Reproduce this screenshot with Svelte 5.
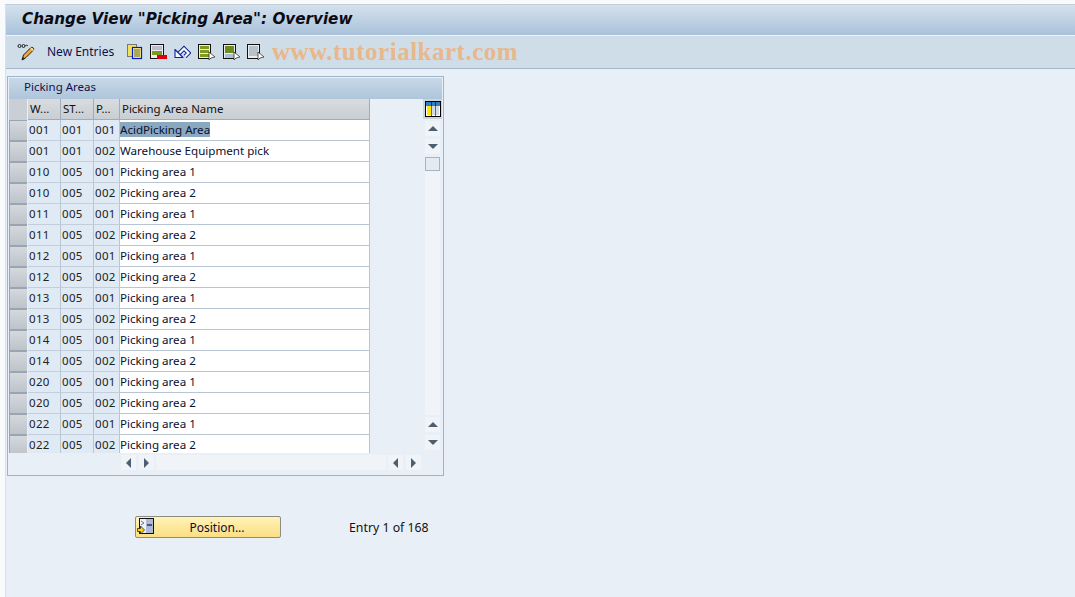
<script>
  const base = [['001','001','001','AcidPicking Area'],['001','001','002','Warehouse Equipment pick']];
  const groups = ['010','011','012','013','014','020','022'];
  const rows = [...base];
  for (const g of groups) {
    rows.push([g,'005','001','Picking area 1']);
    rows.push([g,'005','002','Picking area 2']);
  }
</script>

<div class="page">
  <div class="inner">
    <header class="title"><h1>Change View "Picking Area": Overview</h1></header>
    <div class="toolbar">
      <svg class="ic pencil" width="18" height="18" viewBox="0 0 18 18">
        <path d="M5 17l1.500-5L14 4.500c1.500-1 3.500 1 2.500 2.500L9 14.500z" fill="#f6a92c" stroke="#1c1c1c" stroke-width="1"/>
        <path d="M14 5l2.500 2.500" stroke="#f4e8c8" stroke-width="1.500"/>
        <path d="M5 17l1-3 2 2z" fill="#222"/>
        <circle cx="2.500" cy="3" r="1.500" fill="none" stroke="#222"/>
        <circle cx="6.500" cy="3" r="1.500" fill="none" stroke="#222"/>
        <path d="M8 3c1-1 2-1 3 0" fill="none" stroke="#222"/>
      </svg>
      <span class="ne">New Entries</span>
      <svg class="ic copy" width="16" height="16" viewBox="0 0 16 16">
        <rect x="0.500" y="0.500" width="9" height="12" fill="#f1e15a" stroke="#777"/>
        <rect x="5.500" y="3.500" width="9" height="11" fill="#fff27a" stroke="#0018c8" stroke-width="1.200"/>
        <path d="M7 6h6M7 8h6M7 10h6M7 12h6" stroke="#333" stroke-width="0.800"/>
      </svg>
      <svg class="ic del" width="17" height="17" viewBox="0 0 17 17">
        <rect x="0.500" y="0.500" width="13" height="14" fill="#e8eef2" stroke="#111"/>
        <path d="M2 3h10M2 5h10" stroke="#98a" stroke-width="1.200"/>
        <rect x="2" y="7" width="10" height="4" fill="#7f9a1f"/>
        <rect x="7" y="11" width="10" height="4" fill="#e00010"/>
      </svg>
      <svg class="ic undo" width="17" height="15" viewBox="0 0 17 15">
        <path d="M5 8.500L10 3.500 14.500 8 11 11.500" fill="none" stroke="#10209a" stroke-width="4.200"/>
        <path d="M5 8.500L10 3.500 14.500 8 11 11.500" fill="none" stroke="#f4f8ff" stroke-width="2.200"/>
        <path d="M1 4.500V12.500H9z" fill="#f4f8ff" stroke="#10209a" stroke-width="1.100" stroke-linejoin="round"/>
      </svg>
      <svg class="ic prev" width="18" height="17" viewBox="0 0 18 17">
        <rect x="0.500" y="0.500" width="12" height="14" fill="#e8eef2" stroke="#111"/>
        <rect x="2" y="2" width="9" height="3" fill="#7f9a1f"/>
        <rect x="2" y="6" width="9" height="3" fill="#7f9a1f"/>
        <rect x="2" y="10" width="9" height="3" fill="#7f9a1f"/>
        <path d="M11 8v8l2-2 4-1z" fill="#fff" stroke="#333" stroke-width="0.800"/>
      </svg>
      <svg class="ic next" width="18" height="17" viewBox="0 0 18 17">
        <rect x="0.500" y="0.500" width="12" height="14" fill="#e8eef2" stroke="#111"/>
        <rect x="2" y="2" width="9" height="7" fill="#6d8a1c"/>
        <path d="M2 11h9M2 13h9" stroke="#6a90b8" stroke-width="1.200"/>
        <path d="M11 8v8l2-2 4-1z" fill="#fff" stroke="#333" stroke-width="0.800"/>
      </svg>
      <svg class="ic last" width="18" height="17" viewBox="0 0 18 17">
        <rect x="0.500" y="0.500" width="12" height="14" fill="#e8eef2" stroke="#111"/>
        <path d="M2 3h9M2 5h9M2 7h9M2 9h9M2 11h9" stroke="#8a94a0" stroke-width="1"/>
        <path d="M11 8v8l2-2 4-1z" fill="#fff" stroke="#333" stroke-width="0.800"/>
      </svg>
      <span class="wm">www.tutorialkart.com</span>
    </div>

    <main class="content">
      <section class="panel">
        <div class="panel-head">Picking Areas</div>
        <div class="panel-body">
          <div class="tablewrap">
            <div class="row head">
              <div class="sel corner"></div>
              <div class="c c1 hc">W...</div>
              <div class="c c2 hc">ST...</div>
              <div class="c c3 hc">P...</div>
              <div class="c c4 hc">Picking Area Name</div>
            </div>
            {#each rows as r, i}
              <div class="row">
                <div class="sel"></div>
                <div class="c c1 key">{r[0]}</div>
                <div class="c c2 key">{r[1]}</div>
                <div class="c c3 key">{r[2]}</div>
                <div class="c c4 val"><span class:mark={i === 0}>{r[3]}</span></div>
              </div>
            {/each}
          </div>
          <div class="vscroll">
            <div class="cfg">
              <svg width="16" height="16" viewBox="0 0 16 16">
                <rect x="0.500" y="0.500" width="15" height="15" fill="#fff" stroke="#000"/>
                <rect x="1" y="1" width="14" height="4" fill="#2f7fc4"/>
                <rect x="2" y="5" width="4" height="9" fill="#ffe600"/>
                <rect x="7" y="5" width="3" height="9" fill="#d4dbe2"/>
                <rect x="11" y="5" width="3" height="9" fill="#d4dbe2"/>
                <path d="M6.500 1v14M10.500 1v14" stroke="#000" stroke-width="0.600"/>
              </svg>
            </div>
            <button class="sb" aria-label="up"><i class="up"></i></button>
            <button class="sb" aria-label="down"><i class="down"></i></button>
            <div class="thumb"></div>
            <div class="track"></div>
            <button class="sb" aria-label="up"><i class="up"></i></button>
            <button class="sb" aria-label="down"><i class="down"></i></button>
          </div>
          <div class="hscroll">
            <button class="sb" aria-label="left"><i class="left"></i></button>
            <button class="sb" aria-label="right"><i class="right"></i></button>
            <div class="htrack"></div>
            <button class="sb" aria-label="left"><i class="left"></i></button>
            <button class="sb" aria-label="right"><i class="right"></i></button>
          </div>
        </div>
      </section>

      <div class="actions">
        <button class="pos">
          <svg class="posic" width="17" height="17" viewBox="0 0 17 17">
            <rect x="2.500" y="0.500" width="14" height="15" fill="#aebbd8" stroke="#111"/>
            <rect x="3" y="1" width="6" height="14" fill="#eef2f8"/>
            <path d="M10 7h5" stroke="#334" stroke-width="1.500"/>
            <path d="M4 3l3 2-3 2" fill="none" stroke="#556" stroke-width="0.800"/>
            <path d="M0.500 10.500h3v-2.500l4 4-4 4v-2.500h-3z" fill="#ffd800" stroke="#222" stroke-width="0.800"/>
          </svg>
          <span>Position...</span>
        </button>
        <span class="entry">Entry 1 of 168</span>
      </div>
    </main>
  </div>
</div>

<style>
  :global(body) { margin: 0; background: #fff; }
  .page { width: 1075px; height: 597px; overflow: hidden; font-family: "Noto Sans", sans-serif; font-size: 11.600px; color: #111; background: #f8fafc; padding: 4px 0 0 5px; box-sizing: border-box; }
  .inner { height: 593px; display: flex; flex-direction: column; background: #e9eff6; border-top: 1px solid #c3ced9; border-left: 1px solid #d8e0e8; box-sizing: border-box; }
  .title { height: 30px; background: linear-gradient(#d4e1ed, #a9c2da); display: flex; align-items: center; padding-left: 16px; padding-bottom: 2px; box-sizing: border-box; flex: none; }
  h1 { margin: 0; font: italic bold 15.200px "DejaVu Sans", sans-serif; color: #0b0b14; white-space: nowrap; }
  .toolbar { height: 34px; background: #cfdde8; border-top: 1px solid #eef3f7; border-bottom: 1px solid #a5b8c9; box-sizing: border-box; display: flex; align-items: center; flex: none; }
  .ic { flex: none; }
  .pencil { margin-left: 11px; }
  .ne { margin-left: 12px; font-size: 12px; color: #10104a; width: 79px; white-space: nowrap; position: relative; top: -1px; }
  .copy { margin-left: 1px; }
  .del { margin-left: 7px; }
  .undo { margin-left: 7px; }
  .prev { margin-left: 7px; }
  .next { margin-left: 7px; }
  .last { margin-left: 6px; }
  .wm { margin-left: 7px; font: bold 25px "Liberation Serif", serif; color: #e8b88a; white-space: nowrap; letter-spacing: 0.500px; }
  .content { flex: 1; padding: 7px 0 0 1px; box-sizing: border-box; }
  .panel { width: 437px; height: 400px; box-sizing: border-box; border: 1px solid #9db5cc; padding: 1px; background: #e9eff6; }
  .panel-head { height: 21px; background: linear-gradient(#c8d8e7, #aec5db); padding-left: 15px; line-height: 17px; font-size: 11.500px; color: #10104a; box-sizing: border-box; }
  .panel-body { display: grid; grid-template-columns: 414px 19px; grid-template-rows: 354px 22px; }
  .tablewrap { overflow: hidden; }
  .row { display: flex; height: 21px; }
  .sel { width: 18px; margin-right: 1px; flex: none; box-sizing: border-box; background: linear-gradient(#d5d9de, #bcc3ca); border: 1px solid #9aa5b0; border-width: 1px 0 1px 1px; }
  .corner { background: #c9cfd5; border: none; }
  .c { box-sizing: border-box; height: 21px; line-height: 19px; font-size: 11.600px; white-space: nowrap; overflow: hidden; flex: none; }
  .c1 { width: 33px; }
  .c2 { width: 33px; }
  .c3 { width: 26px; }
  .c4 { width: 250px; }
  .hc { background: linear-gradient(#d8dcdf, #c8ced3); border-right: 1px solid #9fadba; border-bottom: 1px solid #9fadba; padding-left: 2px; color: #111; font-size: 11.450px; }
  .key { background: #dfeaf5; border-right: 1px solid #b8c6d4; border-bottom: 1px solid #c2cedb; padding-left: 1px; color: #222; font-size: 11.500px; letter-spacing: 0.300px; }
  .val { background: #fff; border-right: 1px solid #b8c6d4; border-bottom: 1px solid #b8c6d4; color: #0a1030; }
  .mark { background: #8aa8c0; }
  .vscroll { display: flex; flex-direction: column; align-items: center; grid-row: 1; grid-column: 2; }
  .cfg { width: 19px; height: 20px; background: #cdd5dc; display: flex; align-items: center; justify-content: center; margin-bottom: 2px; flex: none; }
  .sb { width: 15px; height: 15px; padding: 0; margin: 0 0 3px; border: none; background: #f0f4f9; display: flex; align-items: center; justify-content: center; flex: none; }
  .sb i { display: block; width: 0; height: 0; }
  .up { border-left: 5px solid transparent; border-right: 5px solid transparent; border-bottom: 5px solid #4c5f70; }
  .down { border-left: 5px solid transparent; border-right: 5px solid transparent; border-top: 5px solid #4c5f70; }
  .left { border-top: 5px solid transparent; border-bottom: 5px solid transparent; border-right: 5px solid #4c5f70; }
  .right { border-top: 5px solid transparent; border-bottom: 5px solid transparent; border-left: 5px solid #4c5f70; }
  .thumb { width: 15px; height: 14px; box-sizing: border-box; border: 1px solid #a8b4c0; background: #e3eaf3; flex: none; }
  .track { width: 15px; flex: 1; background: #f0f4f9; margin-bottom: 2px; }
  .hscroll { grid-row: 2; grid-column: 1 / span 2; display: flex; padding: 2px 0 0 112px; box-sizing: border-box; }
  .hscroll .sb { margin: 0 3px 0 0; }
  .htrack { width: 230px; height: 15px; background: #f0f4f9; margin-right: 2px; margin-left: -1px; }
  .actions { display: flex; align-items: center; margin-top: 40px; padding-left: 128px; }
  .pos { width: 146px; height: 22px; padding: 1px 0 0; border: 1px solid #8c8c82; border-radius: 2px; background: linear-gradient(#fff3b8, #fbdf83); position: relative; font-family: "Noto Sans", sans-serif; font-size: 12px; line-height: 18px; color: #0c0c30; box-sizing: border-box; display: flex; align-items: center; justify-content: center; }
  .pos span { margin-left: 18px; }
  .posic { position: absolute; left: 1px; top: 1px; }
  .entry { margin-left: 68px; font-size: 12.300px; color: #111; white-space: nowrap; }
</style>
